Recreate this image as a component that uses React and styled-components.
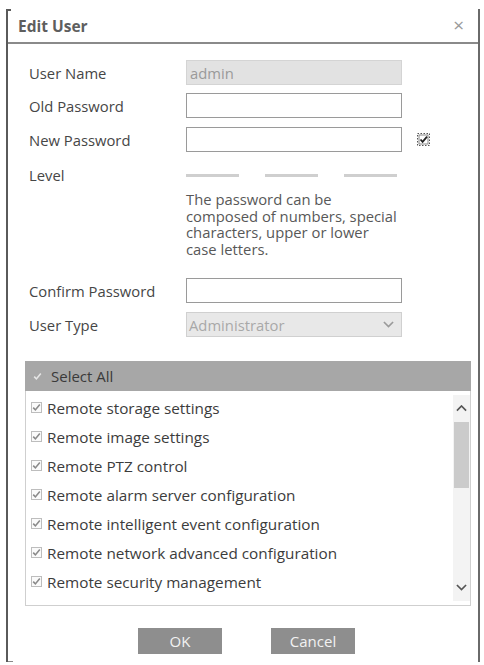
import React from "react";
import styled, { createGlobalStyle } from "styled-components";

const GlobalStyle = createGlobalStyle`
  html, body { margin: 0; padding: 0; background: #fff; }
  body { font-family: "Open Sans", "Noto Sans", sans-serif; color: #444; }
`;

const Frame = styled.div`
  position: relative;
  margin: 9px 4px 0 6px;
  height: 653px;
  border-left: 2px solid #5a5a5a;
  border-right: 2px solid #6a6a6a;
  display: flex;
  flex-direction: column;
  &::before {
    content: "";
    position: absolute;
    left: 0;
    top: 0;
    width: 3px;
    height: 2px;
    background: #5a5a5a;
  }
  &::after {
    content: "";
    position: absolute;
    left: 0;
    bottom: 0;
    width: 5px;
    height: 1px;
    background: #888;
  }
`;

const Header = styled.div`
  height: 33px;
  border-bottom: 2px solid #8a8a8a;
  display: flex;
  align-items: center;
  justify-content: space-between;
  padding: 0 14px 0 10px;
`;

const Title = styled.div`
  font-size: 15.5px;
  font-weight: 700;
  color: #5e5e5e;
`;

const Close = styled.div`
  font-size: 19px;
  color: #9a9a9a;
  line-height: 1;
`;

const Body = styled.div`
  padding: 16px 0 0 21px;
  display: flex;
  flex-direction: column;
`;

const Row = styled.div`
  display: flex;
  align-items: center;
  min-height: 25px;
  margin-top: ${(p) => p.$mt || 0}px;
`;

const Label = styled.div`
  width: 157px;
  flex: none;
  font-size: 14.8px;
  color: #464646;
`;

const Input = styled.div`
  width: 216px;
  height: 25px;
  box-sizing: border-box;
  border: 1px solid #9a9a9a;
  background: ${(p) => (p.$disabled ? "#e2e2e2" : "#fff")};
  border-color: ${(p) => (p.$disabled ? "#d4d4d4" : "#9a9a9a")};
  display: flex;
  align-items: center;
  justify-content: space-between;
  padding: 0 8px 0 3px;
  font-size: 14.8px;
  color: #9a9a9a;
  margin-right: 15px;
`;

const Select = styled(Input)`
  background: #e8e8e8;
  border-color: #d0d0d0;
  padding: 0 7px 0 2px;
  color: #a8a8a8;
`;

const Bars = styled.div`
  display: flex;
  gap: 26px;
  margin-top: 2px;
`;

const Bar = styled.div`
  width: 53px;
  height: 3px;
  background: #cfcfcf;
`;

const Hint = styled.div`
  margin: 4px 0 0 157px;
  width: 230px;
  font-size: 14.8px;
  line-height: 16.5px;
  color: #585858;
`;

const Panel = styled.div`
  margin: 24px 0 0 -4px;
  width: 446px;
  display: flex;
  flex-direction: column;
`;

const PanelHead = styled.div`
  height: 30px;
  background: #a7a7a7;
  display: flex;
  align-items: center;
  padding-left: 7px;
  gap: 8px;
  font-size: 15px;
  color: #3a3a3a;
`;

const ListBox = styled.div`
  height: 214px;
  border: 1px solid #cfcfcf;
  border-top: none;
  display: flex;
`;

const List = styled.div`
  flex: 1;
  padding-top: 2px;
  display: flex;
  flex-direction: column;
`;

const Item = styled.div`
  height: 29px;
  display: flex;
  align-items: center;
  padding-left: 5px;
  gap: 5px;
  font-size: 15.3px;
  color: #3c3c3c;
`;

const Scrollbar = styled.div`
  width: 17px;
  background: #f3f3f3;
  margin: 4px 0;
  display: flex;
  flex-direction: column;
  align-items: center;
`;

const Arrow = styled.div`
  height: 27px;
  display: flex;
  align-items: center;
  justify-content: center;
`;

const Thumb = styled.div`
  width: 15px;
  height: 66px;
  background: #cbcbcb;
`;

const Track = styled.div`
  flex: 1;
`;

const Buttons = styled.div`
  display: flex;
  justify-content: center;
  gap: 49px;
  margin: 22px 0 0 -14px;
`;

const Button = styled.div`
  width: 84px;
  height: 26px;
  background: #8e8e8e;
  color: #f2f2f2;
  font-size: 15px;
  display: flex;
  align-items: center;
  justify-content: center;
`;

const Check = ({ box = true, color = "#8a8a8a", boxColor = "#bdbdbd" }) => (
  <svg width="11" height="11" viewBox="0 0 11 11">
    {box && <rect x="0.5" y="0.5" width="10" height="10" fill="#fafafa" stroke={boxColor} />}
    <path d="M2.2 5.6 L4.4 7.9 L8.8 2.6" fill="none" stroke={color} strokeWidth="1.6" />
  </svg>
);

const FocusCheck = () => (
  <svg width="13" height="13" viewBox="0 0 13 13">
    <rect x="0.5" y="0.5" width="12" height="12" fill="#fff" stroke="#555" strokeDasharray="1.5 1.5" />
    <rect x="2" y="2" width="9" height="9" fill="#fff" stroke="#888" />
    <path d="M3.5 6.5 L5.6 8.8 L10 3.6" fill="none" stroke="#222" strokeWidth="1.8" />
  </svg>
);

const Chevron = ({ dir = "down", color = "#999", size = 12 }) => (
  <svg width={size} height={size * 0.6} viewBox="0 0 12 7">
    <path
      d={dir === "down" ? "M1 1 L6 6 L11 1" : "M1 6 L6 1 L11 6"}
      fill="none"
      stroke={color}
      strokeWidth="1.8"
    />
  </svg>
);

const items = [
  "Remote storage settings",
  "Remote image settings",
  "Remote PTZ control",
  "Remote alarm server configuration",
  "Remote intelligent event configuration",
  "Remote network advanced configuration",
  "Remote security management",
];

export default function App() {
  return (
    <>
      <GlobalStyle />
      <Frame>
        <Header>
          <Title>Edit User</Title>
          <Close>×</Close>
        </Header>
        <Body>
          <Row>
            <Label>User Name</Label>
            <Input $disabled>admin</Input>
          </Row>
          <Row $mt={8}>
            <Label>Old Password</Label>
            <Input />
          </Row>
          <Row $mt={9}>
            <Label>New Password</Label>
            <Input />
            <FocusCheck />
          </Row>
          <Row $mt={10}>
            <Label>Level</Label>
            <Bars>
              <Bar />
              <Bar />
              <Bar />
            </Bars>
          </Row>
          <Hint>
            The password can be
            <br />
            composed of numbers, special
            <br />
            characters, upper or lower
            <br />
            case letters.
          </Hint>
          <Row $mt={21}>
            <Label>Confirm Password</Label>
            <Input />
          </Row>
          <Row $mt={9}>
            <Label>User Type</Label>
            <Select>
              <span>Administrator</span>
              <Chevron color="#9a9a9a" size={11} />
            </Select>
          </Row>
          <Panel>
            <PanelHead>
              <Check box={false} color="#e6e6e6" />
              <span>Select All</span>
            </PanelHead>
            <ListBox>
              <List>
                {items.map((t) => (
                  <Item key={t}>
                    <Check />
                    <span>{t}</span>
                  </Item>
                ))}
              </List>
              <Scrollbar>
                <Arrow>
                  <Chevron dir="up" color="#555" size={11} />
                </Arrow>
                <Thumb />
                <Track />
                <Arrow>
                  <Chevron dir="down" color="#555" size={11} />
                </Arrow>
              </Scrollbar>
            </ListBox>
          </Panel>
          <Buttons>
            <Button>OK</Button>
            <Button>Cancel</Button>
          </Buttons>
        </Body>
      </Frame>
    </>
  );
}
